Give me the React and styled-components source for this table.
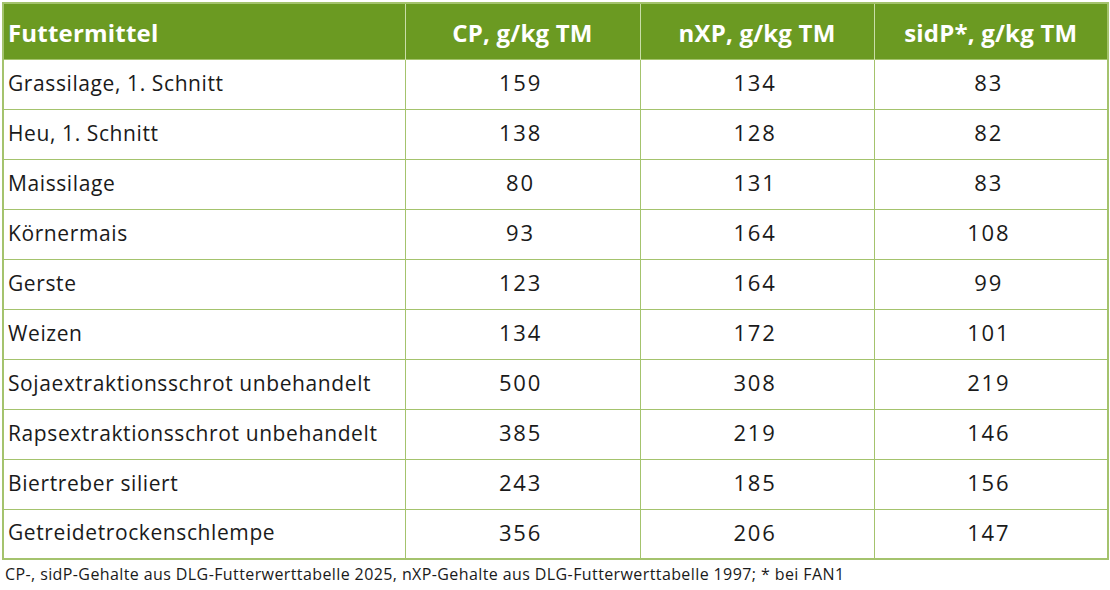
import React from 'react';
import styled, { createGlobalStyle } from 'styled-components';

const GlobalStyle = createGlobalStyle`
  body {
    margin: 0;
    background: #ffffff;
    font-family: "Open Sans", Lato, sans-serif;
  }
`;

const Wrapper = styled.div`
  width: 1110px;
  height: 590px;
  padding: 2px 3px 0 2px;
  box-sizing: border-box;
`;

const Table = styled.table`
  width: 1105px;
  border-collapse: collapse;
  table-layout: fixed;
  border: 2px solid #a4c36d;
`;

const HeadRow = styled.tr`
  height: 56px;
  background: #6b9a22;
`;

const HeadCell = styled.th`
  color: #ffffff;
  font-size: 24px;
  font-weight: 700;
  letter-spacing: 0.2px;
  text-align: ${({ $left }) => ($left ? 'left' : 'center')};
  padding: 3px 4px 0;
  border-left: 1px solid #c9dda8;
  &:first-child {
    border-left: none;
  }
`;

const Row = styled.tr`
  height: 50px;
  border-top: 1px solid #a4c36d;
`;

const Cell = styled.td`
  color: #1a1a1a;
  font-size: ${({ $num }) => ($num ? '22px' : '21px')};
  letter-spacing: ${({ $num }) => ($num ? '1.8px' : '0.6px')};
  text-align: ${({ $num }) => ($num ? 'center' : 'left')};
  padding: ${({ $num }) => ($num ? '0 4px 4px 0' : '0 4px 3px')};
  border-left: 1px solid #a4c36d;
`;

const Note = styled.p`
  margin: 3px 0 0 3px;
  font-size: 16px;
  letter-spacing: 0.4px;
  color: #1a1a1a;
`;

const rows = [
  ['Grassilage, 1. Schnitt', 159, 134, 83],
  ['Heu, 1. Schnitt', 138, 128, 82],
  ['Maissilage', 80, 131, 83],
  ['Körnermais', 93, 164, 108],
  ['Gerste', 123, 164, 99],
  ['Weizen', 134, 172, 101],
  ['Sojaextraktionsschrot unbehandelt', 500, 308, 219],
  ['Rapsextraktionsschrot unbehandelt', 385, 219, 146],
  ['Biertreber siliert', 243, 185, 156],
  ['Getreidetrockenschlempe', 356, 206, 147],
];

export default function App() {
  return (
    <Wrapper>
      <GlobalStyle />
      <Table>
        <colgroup>
          <col style={{ width: 402 }} />
          <col style={{ width: 235 }} />
          <col style={{ width: 234 }} />
          <col style={{ width: 234 }} />
        </colgroup>
        <thead>
          <HeadRow>
            <HeadCell $left>Futtermittel</HeadCell>
            <HeadCell>CP, g/kg TM</HeadCell>
            <HeadCell>nXP, g/kg TM</HeadCell>
            <HeadCell>sidP*, g/kg TM</HeadCell>
          </HeadRow>
        </thead>
        <tbody>
          {rows.map(([name, cp, nxp, sidp]) => (
            <Row key={name}>
              <Cell>{name}</Cell>
              <Cell $num>{cp}</Cell>
              <Cell $num>{nxp}</Cell>
              <Cell $num>{sidp}</Cell>
            </Row>
          ))}
        </tbody>
      </Table>
      <Note>
        CP-, sidP-Gehalte aus DLG-Futterwerttabelle 2025, nXP-Gehalte aus DLG-Futterwerttabelle 1997; * bei FAN1
      </Note>
    </Wrapper>
  );
}
